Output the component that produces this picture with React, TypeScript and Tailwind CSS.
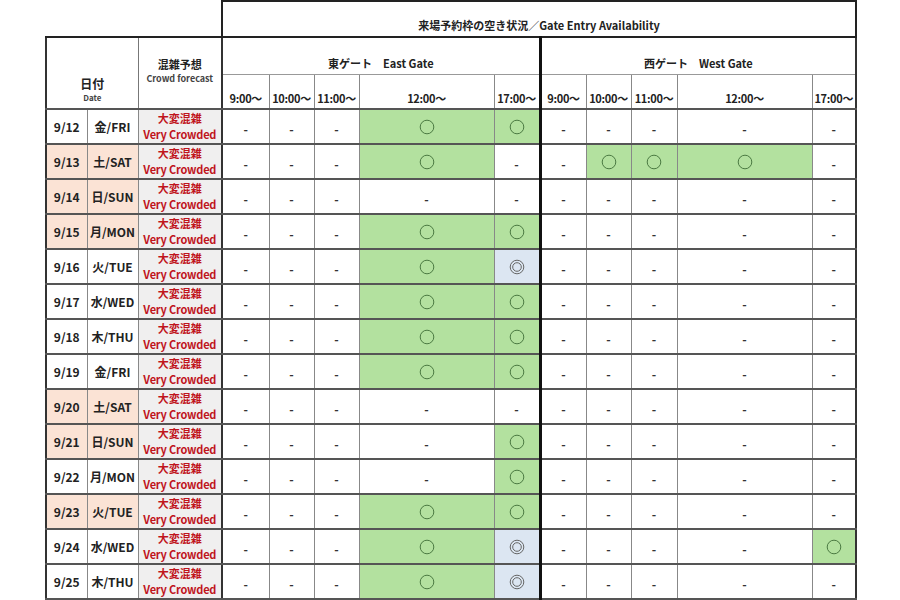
import React from "react";

type Mark = "-" | "o" | "d";

const FONT = { fontFamily: '"Noto Sans CJK JP", "Noto Sans", sans-serif' };

const rows: { date: string; day: string; peach: boolean; marks: Mark[] }[] = [
  { date: "9/12", day: "金/FRI", peach: false, marks: ["-", "-", "-", "o", "o", "-", "-", "-", "-", "-"] },
  { date: "9/13", day: "土/SAT", peach: true, marks: ["-", "-", "-", "o", "-", "-", "o", "o", "o", "-"] },
  { date: "9/14", day: "日/SUN", peach: true, marks: ["-", "-", "-", "-", "-", "-", "-", "-", "-", "-"] },
  { date: "9/15", day: "月/MON", peach: true, marks: ["-", "-", "-", "o", "o", "-", "-", "-", "-", "-"] },
  { date: "9/16", day: "火/TUE", peach: false, marks: ["-", "-", "-", "o", "d", "-", "-", "-", "-", "-"] },
  { date: "9/17", day: "水/WED", peach: false, marks: ["-", "-", "-", "o", "o", "-", "-", "-", "-", "-"] },
  { date: "9/18", day: "木/THU", peach: false, marks: ["-", "-", "-", "o", "o", "-", "-", "-", "-", "-"] },
  { date: "9/19", day: "金/FRI", peach: false, marks: ["-", "-", "-", "o", "o", "-", "-", "-", "-", "-"] },
  { date: "9/20", day: "土/SAT", peach: true, marks: ["-", "-", "-", "-", "-", "-", "-", "-", "-", "-"] },
  { date: "9/21", day: "日/SUN", peach: true, marks: ["-", "-", "-", "-", "o", "-", "-", "-", "-", "-"] },
  { date: "9/22", day: "月/MON", peach: false, marks: ["-", "-", "-", "-", "o", "-", "-", "-", "-", "-"] },
  { date: "9/23", day: "火/TUE", peach: true, marks: ["-", "-", "-", "o", "o", "-", "-", "-", "-", "-"] },
  { date: "9/24", day: "水/WED", peach: false, marks: ["-", "-", "-", "o", "d", "-", "-", "-", "-", "o"] },
  { date: "9/25", day: "木/THU", peach: false, marks: ["-", "-", "-", "o", "d", "-", "-", "-", "-", "-"] },
];

const times = ["9:00～", "10:00～", "11:00～", "12:00～", "17:00～"];
const colWidths = [41, 51, 84, 47, 45, 45, 135, 46, 46, 45, 46, 135, 44];

function Circle() {
  return (
    <svg width="16" height="16" viewBox="0 0 16 16" className="mx-auto block">
      <circle cx="8" cy="8" r="6.8" fill="none" stroke="#4b7a42" strokeWidth="1" />
    </svg>
  );
}

function DoubleCircle() {
  return (
    <svg width="16" height="16" viewBox="0 0 16 16" className="mx-auto block">
      <circle cx="8" cy="8" r="6.8" fill="none" stroke="#666" strokeWidth="1" />
      <circle cx="8" cy="8" r="4.3" fill="none" stroke="#666" strokeWidth="1" />
    </svg>
  );
}

function MarkCell({ mark, idx }: { mark: Mark; idx: number }) {
  const bg = mark === "o" ? "bg-[#b3e19f]" : mark === "d" ? "bg-[#dce6f2]" : "bg-white";
  const right = idx === 4 ? "border-r-[3px] border-r-[#111]" : idx === 9 ? "border-r-2 border-r-[#333]" : "border-r border-r-[#888]";
  return (
    <td className={`${bg} ${right} border-b-2 border-b-[#555] p-0 text-center align-middle`}>
      {mark === "o" ? <Circle /> : mark === "d" ? <DoubleCircle /> : <span className="text-[12px] font-bold text-[#333]">-</span>}
    </td>
  );
}

export default function App() {
  return (
    <div className="w-[900px] h-[600px] bg-white overflow-hidden" style={FONT}>
      <table className="ml-[45px] w-[810px] table-fixed border-collapse text-[#222]">
        <colgroup>
          {colWidths.map((w, i) => (
            <col key={i} style={{ width: w }} />
          ))}
        </colgroup>
        <tbody>
          <tr className="h-[36px]">
            <td colSpan={3} className="p-0 border-b-2 border-b-[#222]" />
            <td
              colSpan={10}
              className="border-2 border-[#222] p-0 pb-[3px] align-bottom text-center text-[11px] font-bold"
            >
              来場予約枠の空き状況／Gate Entry Availability
            </td>
          </tr>
          <tr className="h-[37px]">
            <td
              colSpan={2}
              rowSpan={2}
              className="border-l-2 border-l-[#333] border-r border-r-[#777] border-b-2 border-b-[#555] p-0 pb-[4px] align-bottom text-center"
            >
              <div className="text-[12px] font-bold leading-[16px]">日付</div>
              <div className="text-[8px] font-bold leading-[12px] text-[#444]">Date</div>
            </td>
            <td
              rowSpan={2}
              className="border-r-2 border-r-[#333] border-b-2 border-b-[#555] p-0 pb-[22px] align-bottom text-center"
            >
              <div className="text-[11px] font-bold leading-[15px]">混雑予想</div>
              <div className="text-[9px] font-bold leading-[14px] text-[#444]">Crowd forecast</div>
            </td>
            <td
              colSpan={5}
              className="border-r-[3px] border-r-[#111] border-b border-b-[#999] p-0 pb-[2px] align-bottom text-center text-[11px] font-bold"
            >
              東ゲート　East Gate
            </td>
            <td
              colSpan={5}
              className="border-r-2 border-r-[#333] border-b border-b-[#999] p-0 pb-[2px] align-bottom text-center text-[11px] font-bold"
            >
              西ゲート　West Gate
            </td>
          </tr>
          <tr className="h-[35px]">
            {[...times, ...times].map((t, i) => (
              <td
                key={i}
                className={`${
                  i === 4 ? "border-r-[3px] border-r-[#111]" : i === 9 ? "border-r-2 border-r-[#333]" : "border-r border-r-[#888]"
                } border-b-2 border-b-[#555] p-0 pb-[2px] align-bottom text-center text-[11px] font-bold tracking-[-0.3px] whitespace-nowrap`}
              >
                {t}
              </td>
            ))}
          </tr>
          {rows.map((r) => (
            <tr key={r.date} className="h-[35px]">
              <td
                className={`${r.peach ? "bg-[#fbe3d5]" : "bg-white"} border-l-2 border-l-[#333] border-r border-r-[#888] border-b-2 border-b-[#555] p-0 text-center text-[12px] font-bold`}
              >
                {r.date}
              </td>
              <td
                className={`${r.peach ? "bg-[#fbe3d5]" : "bg-white"} border-r border-r-[#888] border-b-2 border-b-[#555] p-0 text-center text-[12px] font-bold whitespace-nowrap`}
              >
                {r.day}
              </td>
              <td className="bg-[#f0efef] border-r-2 border-r-[#333] border-b-2 border-b-[#555] p-0 text-center text-[#c0141c] font-bold">
                <div className="text-[11px] leading-[15px]">大変混雑</div>
                <div className="text-[11px] leading-[17px] tracking-[-0.2px] whitespace-nowrap">Very Crowded</div>
              </td>
              {r.marks.map((m, i) => (
                <MarkCell key={i} mark={m} idx={i} />
              ))}
            </tr>
          ))}
        </tbody>
      </table>
    </div>
  );
}
